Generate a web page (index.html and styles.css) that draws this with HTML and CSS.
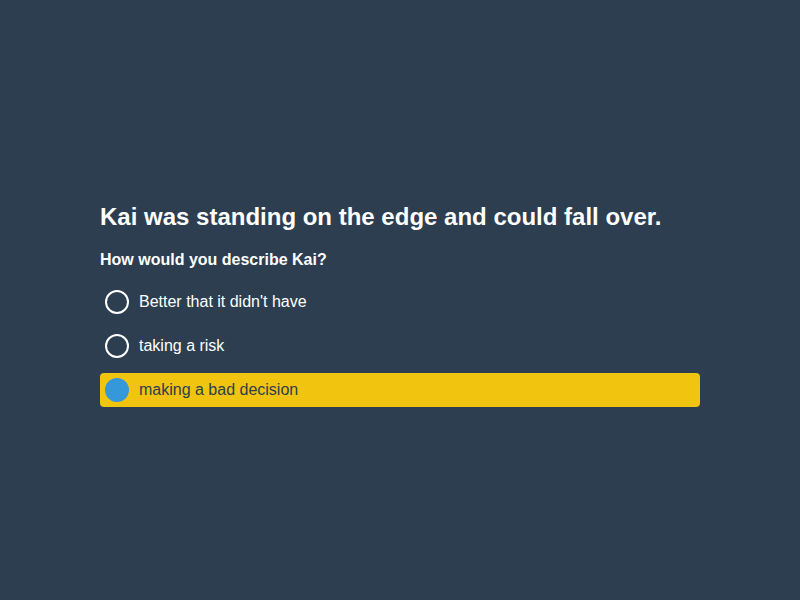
FILE: index.html
```
<!DOCTYPE html>
<html>
<head>
<meta charset="utf-8">
<link rel="stylesheet" href="styles.css">
</head>
<body>
<div class="quiz">
  <h1 class="title">Kai was standing on the edge and could fall over.</h1>
  <h2 class="question">How would you describe Kai?</h2>
  <div class="options">
    <div class="option"><span class="radio"></span><span class="label">Better that it didn't have</span></div>
    <div class="option"><span class="radio"></span><span class="label">taking a risk</span></div>
    <div class="option selected"><span class="radio"></span><span class="label">making a bad decision</span></div>
  </div>
</div>
</body>
</html>
```
FILE: styles.css
```
html, body {
  margin: 0;
  padding: 0;
  background: #2c3e50;
  height: 100%;
}
body {
  font-family: "Liberation Sans", Arial, sans-serif;
  color: #ffffff;
}
.quiz {
  width: 600px;
  margin: 0 auto;
  padding-top: 203px;
}
.title {
  font-size: 24px;
  line-height: 28px;
  font-weight: bold;
  margin: 0 0 19px 0;
}
.question {
  font-size: 16px;
  line-height: 19px;
  font-weight: bold;
  margin: 0 0 16px 0;
}
.options {
  display: flex;
  flex-direction: column;
  gap: 10px;
}
.option {
  display: flex;
  align-items: center;
  gap: 10px;
  height: 34px;
  padding: 0 5px;
  border-radius: 4px;
  font-size: 16px;
}
.radio {
  width: 24px;
  height: 24px;
  box-sizing: border-box;
  border: 2px solid #ffffff;
  border-radius: 50%;
  flex: none;
}
.option.selected {
  background: #f1c40f;
  color: #2c3e50;
}
.option.selected .radio {
  background: #3498db;
  border-color: #3498db;
}
```
